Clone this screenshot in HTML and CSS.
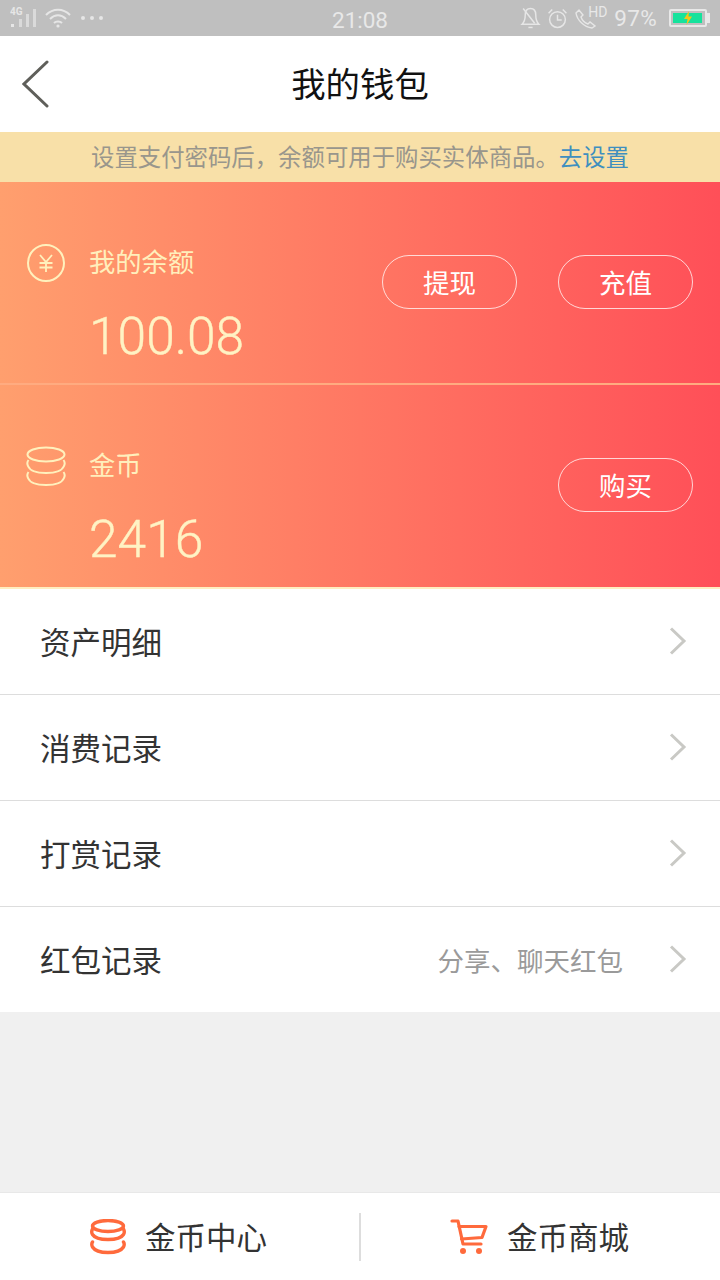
FILE: index.html
```html
<!DOCTYPE html>
<html lang="zh-CN">
<head>
  <meta charset="UTF-8" />
  <title>我的钱包</title>
  <link rel="stylesheet" href="styles.css">
</head>
<body>
  <div id="app">
    <!-- Status bar -->
    <div class="status-bar">
      <div class="status-side">
        <svg class="ic-signal" width="28" height="22" viewBox="0 0 28 22">
          <text x="0" y="8" class="net-text">4G</text>
          <g fill="#e6e6e6">
            <rect x="1" y="17" width="3" height="3" />
            <rect x="9" y="12" width="3" height="8" opacity=".7" />
            <rect x="16" y="7" width="3" height="13" opacity=".7" />
            <rect x="23" y="2" width="3" height="18" opacity=".7" />
          </g>
        </svg>
        <svg class="ic-wifi" width="26" height="20" viewBox="0 0 26 20" fill="none" stroke="#e6e6e6" stroke-width="2">
          <path d="M1 7C8 0 18 0 25 7" />
          <path d="M5 11C10 6 16 6 21 11" />
          <path d="M9 15C11 13 15 13 17 15" />
          <circle cx="13" cy="18" r="1.6" fill="#e6e6e6" stroke="none" />
        </svg>
        <div class="dots"><i></i><i></i><i></i></div>
      </div>
      <div class="status-time">21:08</div>
      <div class="status-side right">
        <svg width="21" height="24" viewBox="0 0 20 22" fill="none" stroke="#e6e6e6" stroke-width="1.4">
          <path d="M2 17C5 14 5 11 5 8C5 4 7 2 10 2C13 2 15 4 15 8C15 11 15 14 18 17Z" />
          <path d="M8 20H12" />
          <path d="M3 2L14 16" />
        </svg>
        <svg width="21" height="21" viewBox="0 0 20 20" fill="none" stroke="#e6e6e6" stroke-width="1.4">
          <circle cx="10" cy="11" r="7.5" />
          <path d="M10 6.500V11.500H14" />
          <path d="M1.500 5L5 1.500M15 1.500L18.500 5" />
        </svg>
        <div class="hd-call">
          <svg width="24" height="22" viewBox="0 0 24 22" fill="none" stroke="#e6e6e6" stroke-width="1.4">
            <path d="M2 6L5 3L9 8L7 10C8 13 11 16 14 17L16 15L21 19L18 21C10 20 3 13 2 6Z" />
          </svg>
          <span class="hd-text">HD</span>
        </div>
        <span class="status-pct">97%</span>
        <div class="battery"><div class="battery-fill" style="width:97%"><svg width="10" height="14" viewBox="0 0 10 14"><path d="M6 0L1 8H4.500L3.500 14L9 5.500H5.500Z" fill="#f5c518" /></svg></div></div>
      </div>
    </div>

    <!-- Nav -->
    <div class="nav">
      <svg class="back" width="28" height="48" viewBox="0 0 28 48" fill="none" stroke="#5f5f5a" stroke-width="3" stroke-linecap="round">
        <path d="M25 2L2 24L25 46" />
      </svg>
      <div class="nav-title">我的钱包</div>
    </div>

    <div class="notice">设置支付密码后，余额可用于购买实体商品。<span class="notice-link">去设置</span></div>

    <!-- Wallet -->
    <div class="wallet">
      <div class="wallet-row">
        <div class="wallet-info">
          <div class="wallet-head">
            <svg width="40" height="40" viewBox="0 0 40 40" fill="none" stroke="#fff1bd" stroke-width="2">
              <circle cx="20" cy="20" r="18" />
              <path d="M14 12L20 19L26 12M13.500 20H26.500M13.500 24.500H26.500M20 19V29" stroke-width="1.8" />
            </svg>
            <span class="wallet-label">我的余额</span>
          </div>
          <div class="wallet-num">100.08</div>
        </div>
        <div class="wallet-actions">
          <div class="pill">提现</div>
          <div class="pill">充值</div>
        </div>
      </div>
      <div class="wallet-row">
        <div class="wallet-info">
          <div class="wallet-head">
            <svg width="40" height="40" viewBox="0 0 40 40" fill="none" stroke="#fff1bd" stroke-width="2">
              <ellipse cx="20" cy="8.500" rx="18.500" ry="7" />
              <path d="M2.500 14C1 16 1 18 2 20C4 25 11 27 20 27C29 27 36 25 38 20C39 18 39 16 37.500 14" />
              <path d="M2.500 26C1 28 1 30 2 32C4 37 11 39 20 39C29 39 36 37 38 32C39 30 39 28 37.500 26" />
            </svg>
            <span class="wallet-label">金币</span>
          </div>
          <div class="wallet-num">2416</div>
        </div>
        <div class="wallet-actions">
          <div class="pill">购买</div>
        </div>
      </div>
    </div>

    <!-- List -->
    <div class="list">
      <div class="list-row"><span class="list-name">资产明细</span><svg class="chev" width="18" height="28" viewBox="0 0 18 28" fill="none" stroke="#c9c9c5" stroke-width="3"><path d="M2 1.500L15 14L2 26.500" /></svg></div>
      <div class="list-row"><span class="list-name">消费记录</span><svg class="chev" width="18" height="28" viewBox="0 0 18 28" fill="none" stroke="#c9c9c5" stroke-width="3"><path d="M2 1.500L15 14L2 26.500" /></svg></div>
      <div class="list-row"><span class="list-name">打赏记录</span><svg class="chev" width="18" height="28" viewBox="0 0 18 28" fill="none" stroke="#c9c9c5" stroke-width="3"><path d="M2 1.500L15 14L2 26.500" /></svg></div>
      <div class="list-row"><span class="list-name">红包记录</span><span class="list-hint">分享、聊天红包</span><svg class="chev" width="18" height="28" viewBox="0 0 18 28" fill="none" stroke="#c9c9c5" stroke-width="3"><path d="M2 1.500L15 14L2 26.500" /></svg></div>
    </div>

    <div class="spacer"></div>

    <!-- Bottom bar -->
    <div class="footer">
      <div class="footer-btn">
        <svg width="36" height="36" viewBox="0 0 36 36" fill="none" stroke="#ff6a3c" stroke-width="3.400" stroke-linecap="round">
          <ellipse cx="18" cy="7" rx="15.500" ry="5.500" />
          <path d="M2.500 10C1.500 12 1.500 14 2.500 15.500C5 19.500 11 20.500 18 20.500C25 20.500 31 19.500 33.500 15.500C34.500 14 34.500 12 33.500 10" />
          <path d="M2.500 23C1.500 24.500 1.500 26 2.500 28C5 32 11 33.500 18 33.500C25 33.500 31 32 33.500 28C34.500 26 34.500 24.500 33.500 23" />
        </svg>
        <span>金币中心</span>
      </div>
      <div class="footer-line"></div>
      <div class="footer-btn">
        <svg width="38" height="36" viewBox="0 0 38 36" fill="none" stroke="#ff6a3c" stroke-width="3.200" stroke-linejoin="round" stroke-linecap="round">
          <path d="M2 2H8L13 25H31" />
          <path d="M9 7.500H36L32 18.500L11.500 20" />
          <circle cx="13" cy="32" r="3" fill="#ff6a3c" stroke="none" />
          <circle cx="29" cy="32" r="3" fill="#ff6a3c" stroke="none" />
        </svg>
        <span>金币商城</span>
      </div>
    </div>
  </div>
</body>
</html>
```

FILE: styles.css
```css
/* Reset & Base */
* { margin: 0; padding: 0; box-sizing: border-box; }
html, body { width: 720px; height: 1280px; overflow: hidden; font-family: "Noto Sans CJK SC", "Noto Sans", sans-serif; background: #f0f0f0; color: #333; }
#app { display: flex; flex-direction: column; height: 1280px; }

/* Status bar */
.status-bar { display: grid; grid-template-columns: 1fr auto 1fr; align-items: center; height: 36px; padding: 0 10px; background: #bfbfbf; color: #e8e8e8; }
.status-side { display: flex; align-items: center; gap: 7px; }
.status-side.right { justify-content: flex-end; gap: 6px; }
.net-text { font-family: "Roboto", sans-serif; font-size: 10px; font-weight: 700; fill: #e6e6e6; }
.dots { display: flex; gap: 5px; margin-left: 3px; }
.dots i { width: 4px; height: 4px; border-radius: 50%; background: #e6e6e6; }
.status-time { font-family: "Roboto", sans-serif; font-size: 22.500px; padding-top: 4px; }
.hd-call { position: relative; width: 33px; height: 22px; }
.hd-text { position: absolute; top: -3px; right: 0; font-family: "Roboto", sans-serif; font-size: 14px; line-height: 16px; }
.status-pct { font-family: "Roboto", sans-serif; font-size: 22.500px; margin-left: 1px; margin-right: 6px; letter-spacing: 0.3px; }
.battery { position: relative; width: 38px; height: 18px; padding: 2px; border: 2px solid #e8e8e8; border-radius: 2px; margin-right: 3px; }
.battery::after { content: ""; position: absolute; top: 2px; right: -5px; width: 3px; height: 10px; background: #e8e8e8; }
.battery-fill { display: flex; justify-content: center; height: 10px; background: #16e29c; overflow: visible; }
.battery-fill svg { margin-top: -2px; }

/* Nav */
.nav { position: relative; display: flex; justify-content: center; align-items: center; height: 96px; padding-bottom: 4px; background: #fff; }
.nav .back { position: absolute; left: 22px; top: 24px; }
.nav-title { font-size: 34.400px; color: #111; }

/* Notice */
.notice { height: 50px; line-height: 48px; text-align: center; font-size: 23.400px; background: #f8e0a8; color: #99968c; }
.notice-link { color: #3f8fbf; }

/* Wallet */
.wallet { height: 407px; background: linear-gradient(90deg, #ff9f6e, #ff4f58); border-bottom: 2px solid #ffeec0; }
.wallet-row { display: flex; justify-content: space-between; align-items: center; height: 201px; padding: 0 27px 0 26px; }
.wallet-row + .wallet-row { height: 204px; border-top: 2px solid #ffab80; }
.wallet-info { display: flex; flex-direction: column; padding-top: 42px; }
.wallet-head { display: flex; align-items: center; gap: 23px; height: 40px; }
.wallet-label { font-size: 26.300px; line-height: 36px; padding-bottom: 4px; color: #ffefbc; }
.wallet-num { margin: 26px 0 0 63px; font-family: "Roboto", sans-serif; font-size: 51.500px; line-height: 56px; font-weight: 300; -webkit-text-stroke: 0.4px #fff3c4; color: #fff3c4; }
.wallet-actions { display: flex; gap: 41px; margin-bottom: 2px; }
.pill { width: 135px; height: 54px; line-height: 52px; text-align: center; font-size: 26.500px; color: #fff; border: 1px solid rgba(255,255,255,0.75); border-radius: 27px; }

/* List */
.list { background: #fff; }
.list-row { display: flex; align-items: center; height: 106px; padding: 0 33px 0 40px; border-bottom: 1px solid #ddd; }
.list-row:last-child { height: 105px; border-bottom: none; }
.list-name { flex: 1; font-size: 30.500px; line-height: 40px; padding-bottom: 2px; color: #333; }
.list-hint { margin-right: 46px; font-size: 26.500px; color: #9a9a9a; }
.chev { margin-bottom: 2px; }

.spacer { flex: 1; background: #f0f0f0; }

/* Bottom bar */
.footer { display: flex; align-items: center; height: 88px; background: #fff; border-top: 1px solid #e8e8e8; }
.footer-btn { flex: 1; display: flex; justify-content: center; align-items: center; gap: 19px; font-size: 30.500px; color: #333; padding-right: 2px; }
.footer-btn span { padding-bottom: 2px; }
.footer-line { width: 2px; height: 48px; background: #ddd; }
```
